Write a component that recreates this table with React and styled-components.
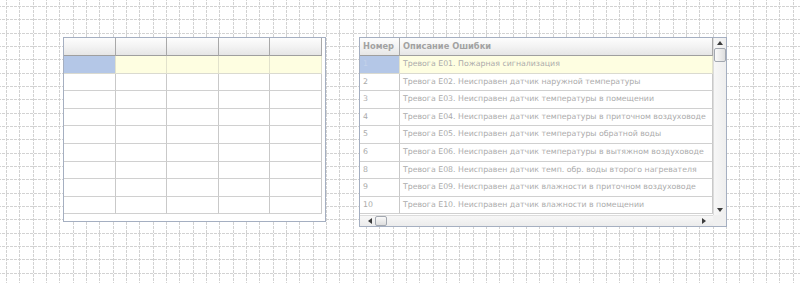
import React from "react";
import styled, { createGlobalStyle } from "styled-components";

const gridTile =
  "data:image/svg+xml," +
  encodeURIComponent(
    "<svg xmlns='http://www.w3.org/2000/svg' width='40' height='40'>" +
      "<g stroke='#d2d2d2' stroke-width='1' stroke-dasharray='3 1' fill='none'>" +
      "<path d='M0.5 0V40M13.5 0V40M27.5 0V40'/>" +
      "<path d='M0 0.5H40M0 13.5H40M0 27.5H40'/>" +
      "</g></svg>"
  );

const GlobalStyle = createGlobalStyle`
  body {
    margin: 0;
    background-color: #fff;
    background-image: url("${gridTile}");
    background-position: 6px 6px;
    font-family: "DejaVu Sans", "Liberation Sans", sans-serif;
  }
`;

const Page = styled.div`
  display: flex;
  align-items: flex-start;
  gap: 33px;
  padding: 37px 0 0 63px;
  height: 283px;
  box-sizing: border-box;
`;

const Frame = styled.div`
  width: ${(p) => p.$w}px;
  height: ${(p) => p.$h}px;
  box-sizing: border-box;
  border: 1px solid #a5afc1;
  background: #fff;
  display: grid;
  grid-template-columns: ${(p) => p.$cols || "1fr"};
  grid-template-rows: ${(p) => p.$rows || "1fr"};
  overflow: hidden;
`;

const Grid = styled.div`
  display: grid;
  grid-template-columns: ${(p) => p.$cols};
  grid-template-rows: 18px repeat(9, 17.6px);
  align-self: start;
`;

const HeadCell = styled.div`
  border-right: 1px solid #a9a9a9;
  border-bottom: 1px solid #9f9f9f;
  background: linear-gradient(to bottom, #fdfdfd, #f3f3f3 50%, #e6e6e6);
  color: #a2a2a2;
  font-weight: bold;
  font-size: 8.3px;
  line-height: 17px;
  padding-left: 3px;
  white-space: nowrap;
  overflow: hidden;
`;

const Cell = styled.div`
  border-right: 1px solid ${(p) => (p.$active ? "#e2e2cc" : "#c9c9c9")};
  border-bottom: 1px solid ${(p) => (p.$active ? "#dadad0" : "#d0d0d0")};
  background: ${(p) => (p.$marker ? "#b4c7e7" : p.$active ? "#fefee1" : "#fff")};
  color: ${(p) => (p.$marker ? "#c4d2ea" : "#ababab")};
  font-size: 7.8px;
  line-height: 16.6px;
  padding-left: 3px;
  white-space: nowrap;
  overflow: hidden;
`;

const VScroll = styled.div`
  grid-row: 1;
  grid-column: 2;
  border-left: 1px solid #dcdcdc;
  background: linear-gradient(to right, #f7f7f7, #eeeeee);
  display: flex;
  flex-direction: column;
  align-items: center;
`;

const HScroll = styled.div`
  grid-row: 2;
  grid-column: 1;
  border-top: 1px solid #dcdcdc;
  background: linear-gradient(to bottom, #f7f7f7, #ececec);
  display: flex;
  align-items: center;
  padding: 0 4px 0 5px;
`;

const Corner = styled.div`
  grid-row: 2;
  grid-column: 2;
  background: #f0f0f0;
`;

const ArrowBtn = styled.div`
  width: ${(p) => (p.$vertical ? "12px" : "10px")};
  height: 10px;
  display: flex;
  align-items: center;
  justify-content: center;
  flex: none;
`;

const Thumb = styled.div`
  box-sizing: border-box;
  width: 12px;
  height: ${(p) => (p.$vertical ? "14px" : "10px")};
  border: 1px solid #a3a8b0;
  border-radius: 2px;
  background: linear-gradient(
    ${(p) => (p.$vertical ? "to right" : "to bottom")},
    #fafafa,
    #dedede
  );
  flex: none;
`;

const Spacer = styled.div`
  flex: 1;
`;

function Arrow({ dir }) {
  const pts = {
    up: "0,4 3,0 6,4",
    down: "0,0 3,4 6,0",
    left: "4,0 0,3 4,6",
    right: "0,0 4,3 0,6",
  }[dir];
  const vert = dir === "up" || dir === "down";
  return (
    <svg width={vert ? 6 : 4} height={vert ? 4 : 6} viewBox={vert ? "0 0 6 4" : "0 0 4 6"}>
      <polygon points={pts} fill="#3c3c3c" />
    </svg>
  );
}

const errors = [
  ["1", "Тревога E01. Пожарная сигнализация"],
  ["2", "Тревога E02. Неисправен датчик наружной температуры"],
  ["3", "Тревога E03. Неисправен датчик температуры в помещении"],
  ["4", "Тревога E04. Неисправен датчик температуры в приточном воздуховоде"],
  ["5", "Тревога E05. Неисправен датчик температуры обратной воды"],
  ["6", "Тревога E06. Неисправен датчик температуры в вытяжном воздуховоде"],
  ["8", "Тревога E08. Неисправен датчик темп. обр. воды второго нагревателя"],
  ["9", "Тревога E09. Неисправен датчик влажности в приточном воздуховоде"],
  ["10", "Тревога E10. Неисправен датчик влажности в помещении"],
];

function EmptyTable() {
  const rows = Array.from({ length: 9 }, (_, r) => r);
  const cols = [0, 1, 2, 3, 4];
  return (
    <Frame $w={263} $h={185}>
      <Grid $cols="repeat(5, 51.6px)">
        {cols.map((c) => (
          <HeadCell key={"h" + c} />
        ))}
        {rows.map((r) =>
          cols.map((c) => (
            <Cell key={r + "-" + c} $active={r === 0} $marker={r === 0 && c === 0} />
          ))
        )}
      </Grid>
    </Frame>
  );
}

function ErrorTable() {
  return (
    <Frame $w={368} $h={190} $cols="1fr 13px" $rows="1fr 11px">
      <Grid $cols="40px 313px">
        <HeadCell>Номер</HeadCell>
        <HeadCell>Описание Ошибки</HeadCell>
        {errors.map(([num, text], i) => (
          <React.Fragment key={num}>
            <Cell $active={i === 0} $marker={i === 0}>
              {num}
            </Cell>
            <Cell $active={i === 0}>{text}</Cell>
          </React.Fragment>
        ))}
      </Grid>
      <VScroll>
        <ArrowBtn $vertical>
          <Arrow dir="up" />
        </ArrowBtn>
        <Thumb $vertical />
        <Spacer />
        <ArrowBtn $vertical>
          <Arrow dir="down" />
        </ArrowBtn>
      </VScroll>
      <HScroll>
        <ArrowBtn>
          <Arrow dir="left" />
        </ArrowBtn>
        <Thumb />
        <Spacer />
        <ArrowBtn>
          <Arrow dir="right" />
        </ArrowBtn>
      </HScroll>
      <Corner />
    </Frame>
  );
}

export default function App() {
  return (
    <>
      <GlobalStyle />
      <Page>
        <EmptyTable />
        <ErrorTable />
      </Page>
    </>
  );
}
